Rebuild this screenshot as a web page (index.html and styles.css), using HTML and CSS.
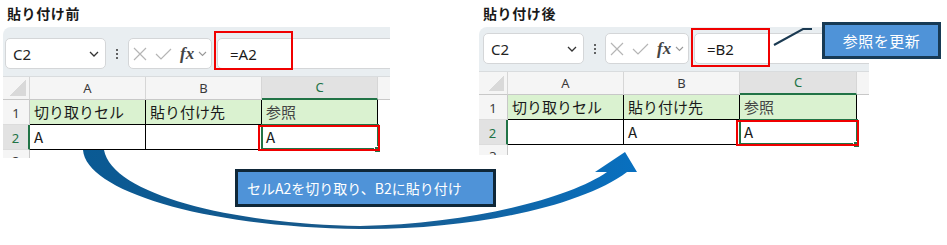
FILE: index.html
```html
<!DOCTYPE html>
<html lang="ja">
<head>
    <meta charset="UTF-8">
    <title>貼り付け前と貼り付け後</title>
    <link rel="stylesheet" href="styles.css">
</head>
<body>

<div class="page">

    <!-- 貼り付け前 -->
    <section class="shot shot-before">
        <h2 class="title">貼り付け前</h2>
        <div class="sheet">
            <div class="toolbar">
                <div class="namebox">
                    <span>C2</span>
                    <svg width="10" height="6" viewBox="0 0 10 6"><path d="M1 1l4 4 4-4" fill="none" stroke="#333" stroke-width="1.3"/></svg>
                </div>
                <div class="kebab"><i></i><i></i><i></i></div>
                <div class="fxbox">
                    <svg width="14" height="14" viewBox="0 0 14 14"><path d="M1 1l12 12M13 1L1 13" stroke="#b5b5b5" stroke-width="1.2"/></svg>
                    <svg width="17" height="12" viewBox="0 0 17 12"><path d="M1 6l5 5L16 1" fill="none" stroke="#b5b5b5" stroke-width="1.2"/></svg>
                    <span class="fx">fx</span>
                    <svg width="9" height="6" viewBox="0 0 9 6"><path d="M1 1l3.5 3.5L8 1" fill="none" stroke="#999" stroke-width="1.1"/></svg>
                </div>
                <div class="formula">
                    <span>=A2</span>
                    <div class="mark"></div>
                </div>
            </div>
            <div class="grid">
                <div class="corner"></div>
                <div class="colhead">A</div>
                <div class="colhead">B</div>
                <div class="colhead is-active">C</div>
                <div class="colhead tail"></div>

                <div class="rowhead">1</div>
                <div class="cell fill">切り取りセル</div>
                <div class="cell fill">貼り付け先</div>
                <div class="cell fill muted">参照</div>
                <div class="blank"></div>

                <div class="rowhead is-active">2</div>
                <div class="cell">A</div>
                <div class="cell"></div>
                <div class="cell selected">A<span class="sel"></span><span class="handle"></span><span class="mark"></span></div>
                <div class="blank"></div>

                <div class="rowhead partial">3</div>
                <div class="blank"></div>
                <div class="blank"></div>
                <div class="blank"></div>
                <div class="blank"></div>
            </div>
        </div>
    </section>

    <!-- 貼り付け後 -->
    <section class="shot shot-after">
        <h2 class="title">貼り付け後</h2>
        <div class="sheet">
            <div class="toolbar">
                <div class="namebox">
                    <span>C2</span>
                    <svg width="10" height="6" viewBox="0 0 10 6"><path d="M1 1l4 4 4-4" fill="none" stroke="#333" stroke-width="1.3"/></svg>
                </div>
                <div class="kebab"><i></i><i></i><i></i></div>
                <div class="fxbox">
                    <svg width="14" height="14" viewBox="0 0 14 14"><path d="M1 1l12 12M13 1L1 13" stroke="#b5b5b5" stroke-width="1.2"/></svg>
                    <svg width="17" height="12" viewBox="0 0 17 12"><path d="M1 6l5 5L16 1" fill="none" stroke="#b5b5b5" stroke-width="1.2"/></svg>
                    <span class="fx">fx</span>
                    <svg width="9" height="6" viewBox="0 0 9 6"><path d="M1 1l3.5 3.5L8 1" fill="none" stroke="#999" stroke-width="1.1"/></svg>
                </div>
                <div class="formula">
                    <span>=B2</span>
                    <div class="mark"></div>
                </div>
            </div>
            <div class="grid">
                <div class="corner"></div>
                <div class="colhead">A</div>
                <div class="colhead">B</div>
                <div class="colhead is-active">C</div>
                <div class="colhead tail"></div>

                <div class="rowhead">1</div>
                <div class="cell fill">切り取りセル</div>
                <div class="cell fill">貼り付け先</div>
                <div class="cell fill muted">参照</div>
                <div class="blank"></div>

                <div class="rowhead is-active">2</div>
                <div class="cell first"></div>
                <div class="cell">A</div>
                <div class="cell selected">A<span class="sel"></span><span class="handle"></span><span class="mark"></span></div>
                <div class="blank"></div>

                <div class="rowhead partial">3</div>
                <div class="blank"></div>
                <div class="blank"></div>
                <div class="blank"></div>
                <div class="blank"></div>
            </div>
        </div>
    </section>

    <!-- 矢印と引き出し線 -->
    <svg class="overlay" width="947" height="245" viewBox="0 0 947 245">
        <defs>
            <linearGradient id="arrowFill" x1="0" y1="0" x2="1" y2="0">
                <stop offset="0" stop-color="#0a5a94"/>
                <stop offset="0.5" stop-color="#19598a"/>
                <stop offset="1" stop-color="#0870c0"/>
            </linearGradient>
        </defs>
        <path d="M83 150C86 190 200 227 360 229C470 230 580 207 627 172L637 172L625 152L595 172L607 172C570 198 470 224 360 226C230 224 112 194 104 150Z" fill="url(#arrowFill)"/>
        <path d="M774 45L803 29L812 29" fill="none" stroke="#1b3a52" stroke-width="2"/>
    </svg>

    <div class="note note-move">セルA2を切り取り、B2に貼り付け</div>
    <div class="note note-ref">参照を更新</div>
</div>

</body>
</html>
```

FILE: styles.css
```css
body {
    margin: 0;
    background-color: #ffffff;
    font-family: "Noto Sans CJK JP", sans-serif;
}
.page {
    position: relative;
    width: 947px;
    height: 245px;
    overflow: hidden;
    display: flex;
    align-items: flex-start;
    padding-left: 3px;
    box-sizing: border-box;
}
.shot {
    display: flex;
    flex-direction: column;
}
.shot-before {
    width: 387px;
}
.shot-after {
    width: 390px;
    margin-left: 89px;
}
.title {
    margin: 0;
    height: 27px;
    padding: 4px 0 0 4px;
    box-sizing: border-box;
    font-size: 14px;
    line-height: 18px;
    font-weight: bold;
    color: #1a1a1a;
    letter-spacing: 0.6px;
}
.sheet {
    background-color: #e9eef1;
    border-top-left-radius: 8px;
    overflow: hidden;
}

/* barre de formule */
.toolbar {
    display: flex;
    align-items: center;
    padding: 11px 0 7px 2px;
    border-bottom: 1px solid #d9dcde;
}
.shot-after .toolbar {
    padding: 6px 0 7px 4px;
}
.namebox {
    width: 101px;
    height: 31px;
    box-sizing: border-box;
    background-color: #ffffff;
    border: 1px solid #d4d6d8;
    border-radius: 5px;
    display: flex;
    align-items: center;
    justify-content: space-between;
    padding: 0 6px 0 7px;
    font-family: "Noto Sans", sans-serif;
    font-size: 15px;
    color: #242424;
}
.kebab {
    width: 22px;
    display: flex;
    flex-direction: column;
    align-items: center;
    gap: 2px;
}
.kebab i {
    width: 2px;
    height: 2px;
    background-color: #333;
    border-radius: 1px;
}
.shot-after .kebab {
    width: 21px;
}
.fxbox {
    width: 84px;
    height: 31px;
    box-sizing: border-box;
    background-color: #ffffff;
    border: 1px solid #d4d6d8;
    border-radius: 5px;
    display: flex;
    align-items: center;
    padding-left: 4px;
    gap: 8px;
}
.fxbox .fx {
    font-family: "Liberation Serif", serif;
    font-style: italic;
    font-weight: bold;
    font-size: 17px;
    color: #444;
    margin-right: -4px;
    line-height: 1;
}
.formula {
    position: relative;
    flex: 1;
    height: 31px;
    margin-left: 5px;
    margin-right: -10px;
    box-sizing: border-box;
    background-color: #ffffff;
    border: 1px solid #d4d6d8;
    border-radius: 5px;
    display: flex;
    align-items: center;
    padding-left: 12px;
    font-family: "Noto Sans", sans-serif;
    font-size: 15px;
    color: #1a1a1a;
}
.formula .mark {
    position: absolute;
    left: -4px;
    top: -8px;
    width: 79px;
    height: 39px;
    border: 2px solid #f00000;
    box-sizing: border-box;
}
.shot-after .formula .mark {
    top: -6px;
}

/* grille */
.grid {
    display: grid;
    grid-template-columns: 27px 116px 116px 116px 1fr;
    grid-template-rows: 23px 25px 25px 8px;
    background-color: #ffffff;
}
.shot-after .grid {
    grid-template-columns: 29px 116px 116px 117px 1fr;
    grid-template-rows: 23px 25px 25px 10px;
}
.corner {
    background-color: #f5f5f5;
    border-right: 1px solid #d6d6d6;
    border-bottom: 1px solid #c8c8c8;
    background-image: linear-gradient(to top left, #d9d9d9 50%, transparent 50%);
    background-size: 16px 16px;
    background-position: right 3px bottom 3px;
    background-repeat: no-repeat;
}
.colhead {
    background-color: #f5f5f5;
    border-right: 1px solid #d6d6d6;
    border-bottom: 1px solid #c8c8c8;
    font-family: "Noto Sans", sans-serif;
    font-size: 13px;
    line-height: 22px;
    text-align: center;
    color: #3a3a3a;
}
.colhead.is-active {
    background-color: #e2e2e2;
    color: #217346;
    border-bottom: 2px solid #217346;
    line-height: 21px;
}
.colhead.tail {
    border-right: none;
}
.rowhead {
    background-color: #f5f5f5;
    border-right: 1px solid #c8c8c8;
    border-bottom: 1px solid #dcdcdc;
    font-family: "Noto Sans", sans-serif;
    font-size: 13px;
    line-height: 26px;
    text-align: center;
    color: #3a3a3a;
}
.rowhead.is-active {
    background-color: #e2e2e2;
    color: #217346;
    border-right: 2px solid #217346;
}
.rowhead.partial {
    overflow: hidden;
    line-height: 22px;
    border-bottom: none;
}
.cell {
    position: relative;
    border-right: 1px solid #000;
    border-bottom: 1px solid #000;
    padding-left: 4px;
    font-size: 15px;
    line-height: 24px;
    color: #1a1a1a;
    white-space: nowrap;
}
.cell.fill {
    background-color: #daf2d0;
}
.cell.muted {
    color: #444;
}
.blank {
    background-color: #ffffff;
}
.cell .sel {
    position: absolute;
    left: -1px;
    top: -1px;
    right: -2px;
    bottom: -1px;
    border: 2px solid #217346;
}
.cell .handle {
    position: absolute;
    right: -4px;
    bottom: -4px;
    width: 5px;
    height: 5px;
    background-color: #217346;
    border: 1px solid #ffffff;
}
.cell .mark {
    position: absolute;
    left: -4px;
    top: 0;
    right: -3px;
    bottom: -2px;
    border: 2px solid #f00000;
}

/* annotations */
.overlay {
    position: absolute;
    left: 0;
    top: 0;
    pointer-events: none;
}
.note {
    position: absolute;
    box-sizing: border-box;
    background-color: #4f93d8;
    color: #ffffff;
    font-size: 14px;
    display: flex;
    align-items: center;
}
.note-move {
    left: 235px;
    top: 169px;
    width: 261px;
    height: 38px;
    border: 3px solid #0f2738;
    padding-left: 9px;
}
.note-ref {
    left: 822px;
    top: 22px;
    width: 119px;
    height: 37px;
    border: 3px solid #173a55;
    justify-content: center;
    font-size: 15px;
    letter-spacing: 0.5px;
}
```
